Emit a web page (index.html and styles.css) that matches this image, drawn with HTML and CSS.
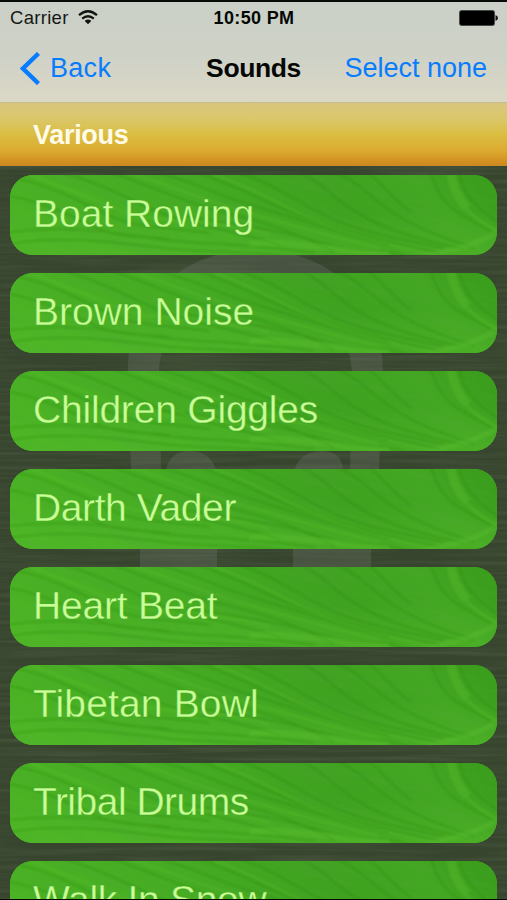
FILE: index.html
```html
<!DOCTYPE html>
<html lang="en">
<head>
<meta charset="utf-8">
<title>Sounds</title>
<link rel="stylesheet" href="styles.css">
</head>
<body>
<svg class="defs" width="0" height="0" aria-hidden="true">
  <defs>
    <linearGradient id="leafBase" x1="0" y1="0.5" x2="1" y2="0.35">
      <stop offset="0" stop-color="#4bb324"/><stop offset=".4" stop-color="#46ac23"/>
      <stop offset=".68" stop-color="#3fa21f"/><stop offset=".88" stop-color="#44a723"/><stop offset="1" stop-color="#3b9e1c"/>
    </linearGradient>
    <linearGradient id="leafGlow" x1="0" y1="0" x2="0" y2="1">
      <stop offset=".45" stop-color="#58be2c" stop-opacity="0"/><stop offset="1" stop-color="#58be2c" stop-opacity=".35"/>
    </linearGradient>
    <filter id="soft" x="-10%" y="-20%" width="120%" height="140%"><feGaussianBlur stdDeviation="1.2"/></filter>
    <filter id="grain" x="0" y="0" width="100%" height="100%">
      <feTurbulence type="fractalNoise" baseFrequency=".012 .11" numOctaves="3" seed="8"/>
      <feColorMatrix values="0 0 0 0 .08  0 0 0 0 .38  0 0 0 0 .04  1.5 0 0 0 -.62"/>
    </filter>
    <filter id="wood" x="0" y="0" width="100%" height="100%">
      <feTurbulence type="fractalNoise" baseFrequency=".008 .22" numOctaves="3" seed="4"/>
      <feColorMatrix values="0 0 0 0 .36  0 0 0 0 .42  0 0 0 0 .29  1.1 0 0 0 -.42"/>
    </filter>
    <symbol id="leaf" viewBox="0 0 488 80" preserveAspectRatio="none">
      <rect width="488" height="80" fill="url(#leafBase)"/>
      <rect width="488" height="80" fill="url(#leafGlow)"/>
      <rect x="-80" y="-170" width="660" height="400" filter="url(#grain)" opacity=".45" transform="rotate(16 244 40)"/>
      <g fill="none" filter="url(#soft)">
        <g stroke="#24850f" stroke-width="1.5" opacity=".38">
          <path d="M-5 20C25 25 50 35 80 50S130 60 160 64"/>
          <path d="M8 4C45 12 65 24 96 39S155 52 200 58"/>
          <path d="M50-3C84 6 112 20 144 35S210 51 270 70"/>
          <path d="M100-3C130 7 160 20 192 31S260 44 325 77"/>
          <path d="M145-3C180 5 206 19 235 28S310 52 380 70"/>
          <path d="M185-3C225 9 250 25 285 38S350 62 430 78"/>
          <path d="M226-3C265 8 285 26 315 40S370 61 435 73"/>
          <path d="M289-3C312 6 327 26 350 39S400 63 455 74"/>
          <path d="M324-3C345 3 362 23 383 37S425 60 465 73"/>
          <path d="M358-3C373 8 383 24 402 37"/>
          <path d="M0 57C60 51 95 56 140 63S215 66 305 78"/>
          <path d="M0 69C60 59 112 69 164 74S230 75 285 82"/>
          <path d="M175 41C220 49 268 54 310 67S370 70 400 82"/>
          <path d="M421-3C427 13 431 23 443 33S473 51 492 61"/>
          <path d="M450-3C451 13 466 34 489 47"/>
        </g>
        <g stroke="#66c735" stroke-width="2" opacity=".28">
          <path d="M20 0C65 15 93 30 120 39S210 44 260 60"/>
          <path d="M120-2C156 9 191 24 230 35S300 56 370 73"/>
          <path d="M205 0C245 13 267 28 298 42S365 67 432 81"/>
          <path d="M441-4C445 14 448 22 458 33" stroke-width="9"/>
          <path d="M456 33Q470 47 490 57" stroke-width="3"/>
          <path d="M418 80C450 75 467 69 488 57" stroke-width="5"/>
          <path d="M240 69C280 64 313 75 380 79" stroke-width="6"/>
        </g>
      </g>
    </symbol>
  </defs>
</svg>
<div class="screen">
  <header class="top">
    <div class="status">
      <div class="carrier"><span>Carrier</span>
        <svg class="wifi" viewBox="0 0 20 15"><g fill="none" stroke="#111411" stroke-width="2.3"><path d="M1 5.2Q10-2.7 19 5.2"/><path d="M4.2 8.7Q10 3.7 15.8 8.7"/></g><path d="M6.7 10.9Q10 8 13.3 10.9L10 14.2Z" fill="#111411"/></svg>
      </div>
      <div class="time">10:50 PM</div>
      <svg class="battery" viewBox="0 0 39 16"><rect x=".5" y=".5" width="35" height="15" rx="2" fill="#000" stroke="#454945"/><path d="M36.5 5Q39 6 39 8T36.5 11Z" fill="#111"/></svg>
    </div>
    <nav class="nav">
      <a class="back"><svg viewBox="0 0 20 33"><path d="M18.5 1.5L3 16.5L18.5 31.5" fill="none" stroke="#087cff" stroke-width="4.4"/></svg><span>Back</span></a>
      <h1>Sounds</h1>
      <a class="select">Select none</a>
    </nav>
  </header>
  <h2 class="section">Various</h2>
  <main class="sounds">
    <svg class="backdrop" viewBox="0 0 507 734" aria-hidden="true">
      <rect width="507" height="734" filter="url(#wood)" opacity=".24"/>
      <g fill="#777b74" fill-opacity=".28">
        <path d="M128 205C128 135 181 84 256 84S383 135 383 205L379 303V360L371 380V402H293V310Q297 285 322 285Q341 285 343 303H350L352 205C348 152 311 116 256 116S163 152 159 205L161 303H166Q171 285 189 285Q214 285 217 310V402H140V380L131 360V303Z"/>
      </g>
    </svg>
    <ul class="list">
      <li><svg class="leaf"><use href="#leaf"/></svg><span class="s1">Boat Rowing</span></li>
      <li><svg class="leaf"><use href="#leaf"/></svg><span class="s2">Brown Noise</span></li>
      <li><svg class="leaf"><use href="#leaf"/></svg><span class="s3">Children Giggles</span></li>
      <li><svg class="leaf"><use href="#leaf"/></svg><span class="s4">Darth Vader</span></li>
      <li><svg class="leaf"><use href="#leaf"/></svg><span class="s5">Heart Beat</span></li>
      <li><svg class="leaf"><use href="#leaf"/></svg><span class="s6">Tibetan Bowl</span></li>
      <li><svg class="leaf"><use href="#leaf"/></svg><span class="s7">Tribal Drums</span></li>
      <li><svg class="leaf"><use href="#leaf"/></svg><span class="s8">Walk In Snow</span></li>
    </ul>
  </main>
</div>
</body>
</html>
```
FILE: styles.css
```css
* { box-sizing: border-box; }
body { margin: 0; font-family: "Liberation Sans", Arial, sans-serif; }
.defs { position: absolute; }
.screen { width: 507px; height: 900px; overflow: hidden; display: flex; flex-direction: column; border-top: 2px solid #080b08; border-bottom: 1px solid #050805; }
.top { height: 101px; flex: none; background: linear-gradient(#cbd0c8, #cdd1c6 50%, #dcd8c6); border-bottom: 1px solid #c5b98d; }
.status { height: 32px; padding: 0 9px 0 10px; display: grid; grid-template-columns: 1fr auto 1fr; align-items: center; font-size: 18.5px; color: #151815; }
.carrier { display: flex; align-items: center; gap: 9px; letter-spacing: .3px; }
.wifi { width: 20px; height: 15px; margin-top: -2px; }
.time { font-size: 18px; font-weight: bold; letter-spacing: .35px; color: #050705; }
.battery { width: 39px; height: 16px; justify-self: end; }
.nav { height: 69px; padding: 0 20px; display: grid; grid-template-columns: 1fr auto 1fr; align-items: center; font-size: 27px; color: #087cff; }
.back { display: flex; align-items: center; gap: 10px; letter-spacing: .3px; }
.back svg { width: 20px; height: 33px; }
.nav h1 { margin: 0; font-size: 26.5px; letter-spacing: -.4px; color: #050705; }
.select { justify-self: end; white-space: nowrap; }
.section { margin: 0; height: 63px; flex: none; padding-left: 33px; line-height: 65px; font-size: 27px; letter-spacing: -.3px; color: #fffbe8; background: linear-gradient(#d9c67e, #dac76a 25%, #dabe42 50%, #dcaa2f 76%, #d18d20 95%, #c98a24); }
.sounds { flex: 1; min-height: 0; position: relative; background: #37452e; overflow: hidden; }
.backdrop { position: absolute; inset: 0; width: 507px; height: 734px; }
.list { position: relative; list-style: none; margin: 0; padding: 9px 10px 0; display: flex; flex-direction: column; gap: 18px; }
.list li { height: 80px; flex: none; position: relative; overflow: hidden; border-radius: 23px; padding-left: 23px; line-height: 77px; font-size: 39px; color: #caff98; white-space: nowrap; background: #43a821; }
.leaf { position: absolute; inset: 0; width: 100%; height: 100%; }
.list span { position: relative; display: inline-block; -webkit-text-stroke: .35px #43aa21; }
.list .s3 { letter-spacing: -.2px; }
.list .s4 { letter-spacing: -.4px; }
.list .s5 { letter-spacing: -.2px; }
.list .s6 { letter-spacing: .15px; }
.list .s7 { letter-spacing: -.5px; }
.list .s8 { letter-spacing: -.3px; }
```
